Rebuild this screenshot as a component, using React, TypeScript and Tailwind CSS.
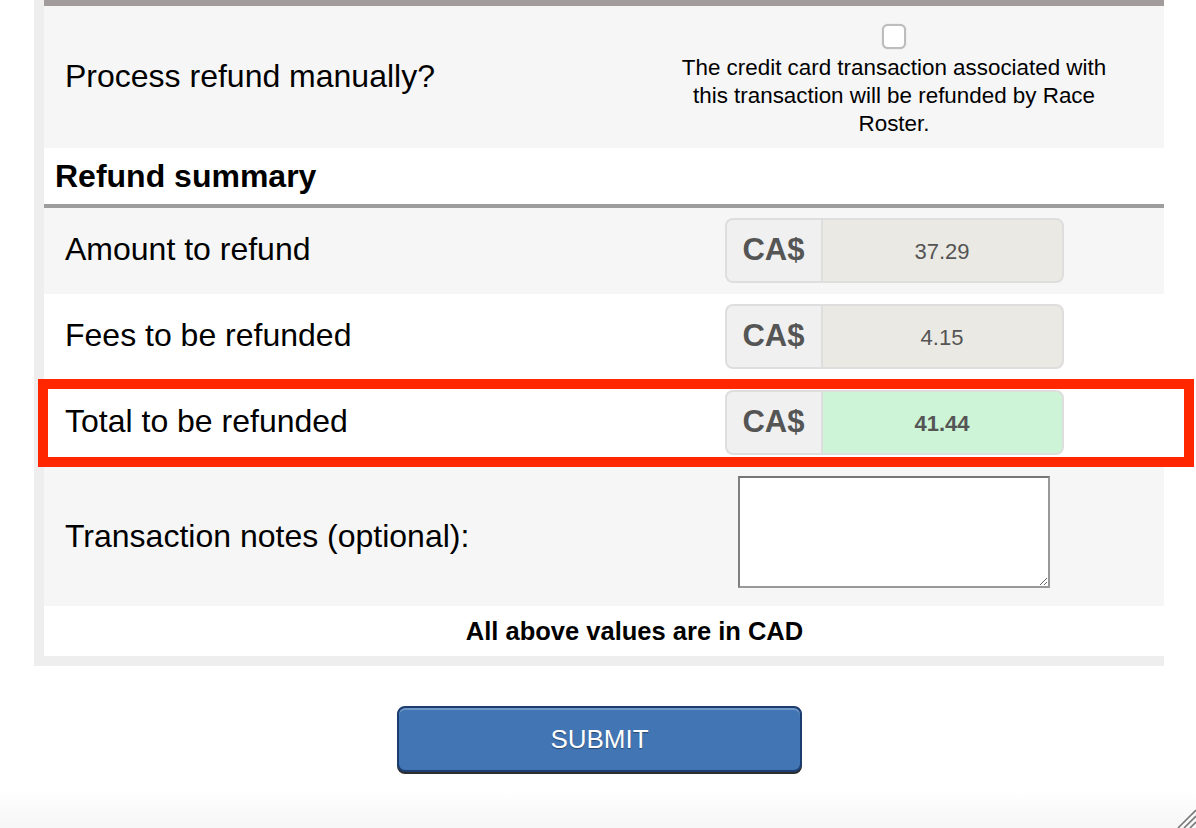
import React from "react";

function CurrencyField({ value, total }: { value: string; total?: boolean }) {
    return (
        <div className="flex h-[65px] w-[339px]">
            <div className="flex w-[96px] items-center justify-center rounded-l-[8px] border-2 border-r-0 border-[#dedede] bg-[#f0f0f0] text-[31px] font-bold text-[#555]">
                CA$
            </div>
            <div
                className={
                    total
                        ? "flex flex-1 items-center justify-center rounded-r-[8px] border-2 border-[#dedede] bg-[#cdf4d7] pt-[2px] text-[22px] font-bold text-[#555]"
                        : "flex flex-1 items-center justify-center rounded-r-[8px] border-2 border-[#dedede] bg-[#eae9e3] pt-[2px] text-[22px] text-[#555]"
                }
            >
                {value}
            </div>
        </div>
    );
}

export default function App() {
    return (
        <div className="relative flex h-[828px] flex-col overflow-hidden bg-white font-['Liberation_Sans',Arial,sans-serif] text-black">
            <div className="ml-[34px] w-[1130px] bg-[#eeeeee] pb-[10px] pl-[10px]">
                <div className="h-[6px] bg-[#a29c9c]" />

                {/* process manually */}
                <div className="grid h-[142px] grid-cols-[580px_540px] bg-[#f6f6f6]">
                    <div className="flex items-center pb-[2px] pl-[21px] text-[32px]">Process refund manually?</div>
                    <div className="flex flex-col items-center pt-[18px]">
                        <input
                            type="checkbox"
                            className="h-[25px] w-[24px] appearance-none rounded-[6px] border-2 border-[#bdbdbd] bg-white shadow-[0_0_1px_rgba(0,0,0,0.3)]"
                        />
                        <p className="mt-[5px] w-[440px] text-center text-[22.4px] leading-[28px]">
                            The credit card transaction associated with this transaction will be refunded by Race Roster.
                        </p>
                    </div>
                </div>

                <div className="flex h-[56px] items-center bg-white pl-[11px] text-[32px] font-bold">Refund summary</div>
                <div className="h-[4px] bg-[#9d9d9d]" />

                <div className="grid h-[86px] grid-cols-[580px_540px] bg-[#f6f6f6]">
                    <div className="flex items-center pb-[5px] pl-[21px] text-[32px]">Amount to refund</div>
                    <div className="flex justify-center pt-[10px]">
                        <CurrencyField value="37.29" />
                    </div>
                </div>

                <div className="grid h-[86px] grid-cols-[580px_540px] bg-white">
                    <div className="flex items-center pb-[5px] pl-[21px] text-[32px]">Fees to be refunded</div>
                    <div className="flex justify-center pt-[10px]">
                        <CurrencyField value="4.15" />
                    </div>
                </div>

                <div className="relative grid h-[86px] grid-cols-[580px_540px] bg-white">
                    <div className="flex items-center pb-[5px] pl-[21px] text-[32px]">Total to be refunded</div>
                    <div className="flex justify-center pt-[10px]">
                        <CurrencyField value="41.44" total />
                    </div>
                    <div className="pointer-events-none absolute -top-px -right-[30px] -bottom-px -left-[6px] border-[10px] border-[#ff2700]" />
                </div>

                <div className="grid h-[140px] grid-cols-[580px_540px] bg-[#f6f6f6]">
                    <div className="flex items-center pl-[21px] text-[32px]">Transaction notes (optional):</div>
                    <div className="flex justify-center pt-[10px]">
                        <textarea className="h-[112px] w-[312px] border-2 border-[#999] border-t-[#767676] border-l-[#808080] bg-white" />
                    </div>
                </div>

                <div className="flex h-[50px] items-center justify-center bg-white pl-[61px] text-[25.5px] font-bold">
                    All above values are in CAD
                </div>
            </div>

            <div className="mt-[40px] flex justify-center pl-[3px]">
                <button className="h-[66px] w-[405px] rounded-[8px] border-2 border-[#1c3d70] bg-[#4275b4] text-[26px] text-white shadow-[inset_0_2px_0_rgba(255,255,255,0.25),0_2px_0_#2e2e2e] [text-shadow:0_1px_1px_rgba(0,0,0,0.4)]">
                    SUBMIT
                </button>
            </div>

            <div className="flex-1" />
            <div className="h-[38px] bg-gradient-to-b from-white to-[#f6f6f6]" />

            <svg className="absolute right-0 bottom-0" width="22" height="22" viewBox="0 0 22 22">
                <line x1="22" y1="4" x2="4" y2="22" stroke="#777" strokeWidth="1.6" />
                <line x1="22" y1="10" x2="10" y2="22" stroke="#777" strokeWidth="1.6" />
                <line x1="22" y1="16" x2="16" y2="22" stroke="#777" strokeWidth="1.6" />
            </svg>
        </div>
    );
}
